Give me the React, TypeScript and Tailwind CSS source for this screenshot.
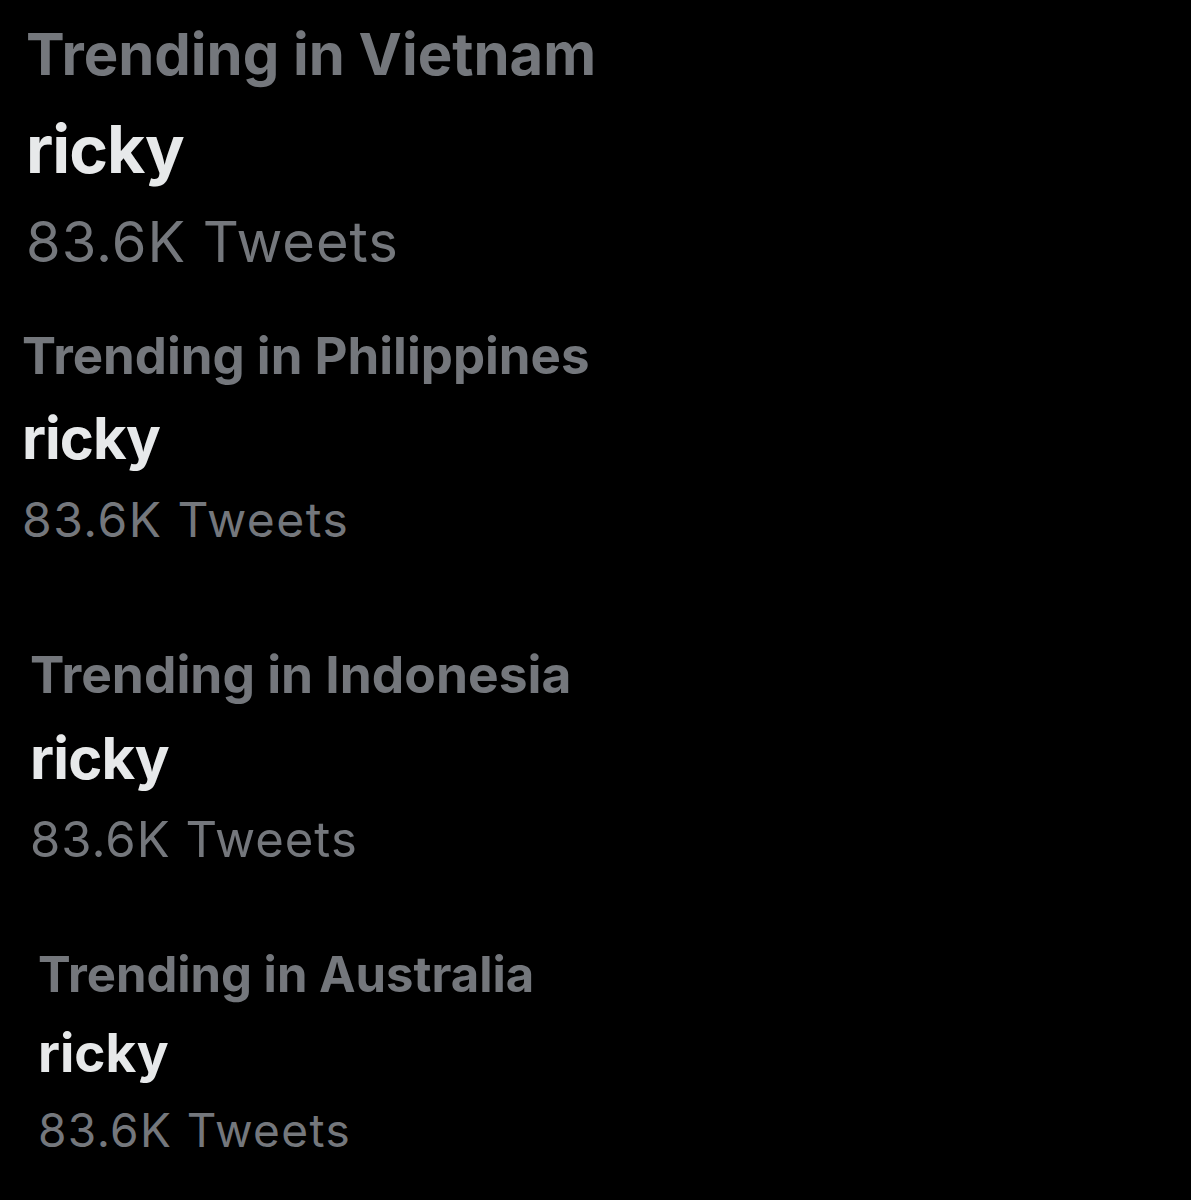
import React from 'react'

// Trend cards clipped from several screenshots, each at its own scale
export default function App() {
  return (
    <div className="min-h-[1200px] w-[1191px] bg-black font-['Inter',sans-serif]">
      {/* Vietnam */}
      <div className="pl-[26px] pt-[9px]">
        <div className="text-[58px] leading-[90px] font-bold text-[#74777c]">Trending in Vietnam</div>
        <div className="text-[66px] leading-[100px] font-bold tracking-[-1px] text-[#e7e9ea]">ricky</div>
        <div className="text-[56px] leading-[87px] tracking-[1px] text-[#74777c]">83.6K Tweets</div>
      </div>

      {/* Philippines */}
      <div className="mt-[30px] pl-[22px]">
        <div className="text-[51px] leading-[80px] font-bold text-[#74777c]">Trending in Philippines</div>
        <div className="text-[58px] leading-[85px] font-bold tracking-[-1px] text-[#e7e9ea]">ricky</div>
        <div className="text-[48px] leading-[78px] tracking-[1.5px] text-[#74777c]">83.6K Tweets</div>
      </div>

      {/* Indonesia */}
      <div className="mt-[75px] pl-[30px]">
        <div className="text-[51.5px] leading-[80px] font-bold text-[#74777c]">Trending in Indonesia</div>
        <div className="text-[58px] leading-[88px] font-bold tracking-[-0.8px] text-[#e7e9ea]">ricky</div>
        <div className="text-[49px] leading-[75px] tracking-[1px] text-[#74777c]">83.6K Tweets</div>
      </div>

      {/* Australia */}
      <div className="mt-[60px] pl-[38px]">
        <div className="text-[49px] leading-[76px] font-bold text-[#74777c]">Trending in Australia</div>
        <div className="text-[53px] leading-[80px] font-bold text-[#e7e9ea]">ricky</div>
        <div className="text-[46px] leading-[75px] tracking-[1.4px] text-[#74777c]">83.6K Tweets</div>
      </div>
    </div>
  )
}
